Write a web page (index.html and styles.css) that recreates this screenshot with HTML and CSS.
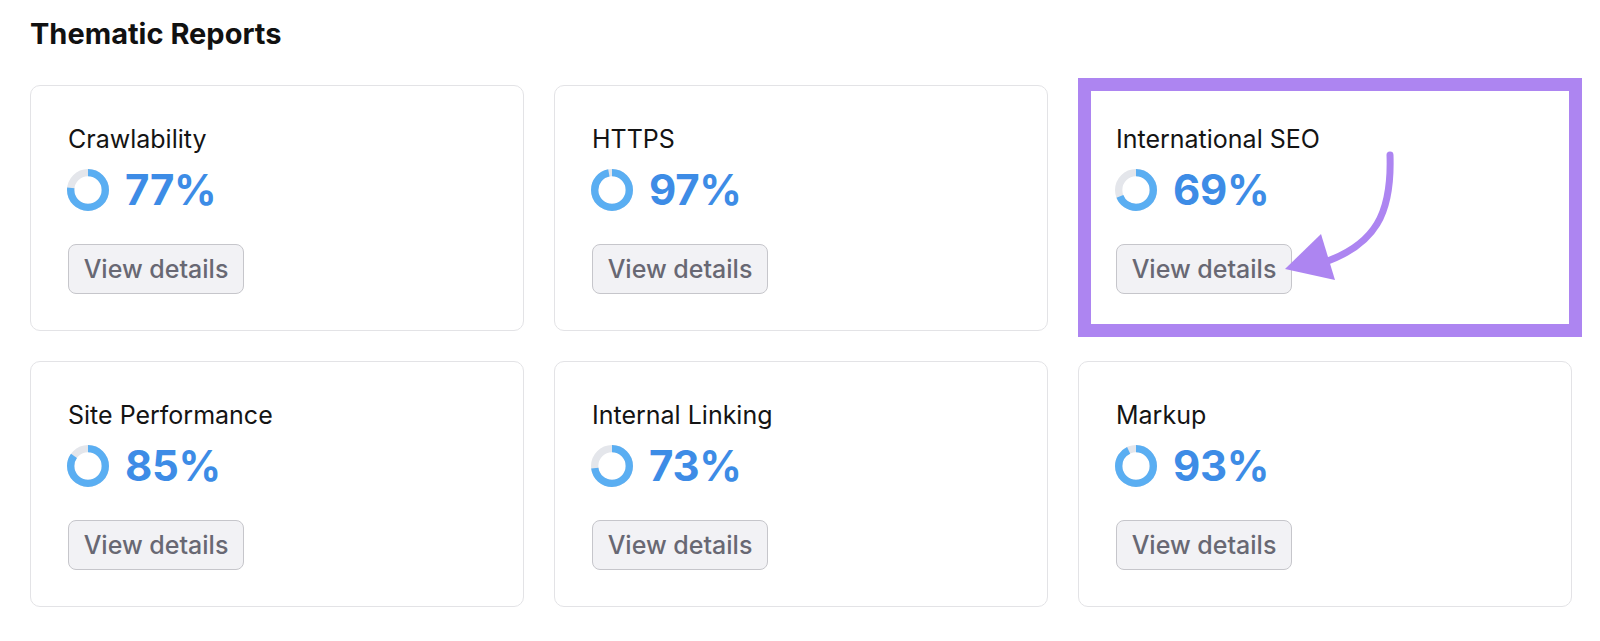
FILE: index.html
```html
<!DOCTYPE html>
<html lang="en">

<head>
    <meta charset="UTF-8">
    <meta name="viewport" content="width=device-width, initial-scale=1.0">
    <title>Thematic Reports</title>
    <link rel="stylesheet" href="styles.css">
</head>

<body>
    <main class="page">
        <h1 class="page-title">Thematic Reports</h1>

        <div class="report-grid">
            <div class="report-card">
                <p class="report-name">Crawlability</p>
                <div class="report-score">
                    <svg class="donut" viewBox="0 0 40 40">
                        <circle class="donut-track" cx="20" cy="20" r="16.5"></circle>
                        <circle class="donut-value" cx="20" cy="20" r="16.5" pathLength="100" stroke-dasharray="77 100"></circle>
                    </svg>
                    <span class="score-value">77%</span>
                </div>
                <button class="details-btn">View details</button>
            </div>

            <div class="report-card">
                <p class="report-name">HTTPS</p>
                <div class="report-score">
                    <svg class="donut" viewBox="0 0 40 40">
                        <circle class="donut-track" cx="20" cy="20" r="16.5"></circle>
                        <circle class="donut-value" cx="20" cy="20" r="16.5" pathLength="100" stroke-dasharray="97 100"></circle>
                    </svg>
                    <span class="score-value">97%</span>
                </div>
                <button class="details-btn">View details</button>
            </div>

            <div class="report-card highlighted">
                <p class="report-name">International SEO</p>
                <div class="report-score">
                    <svg class="donut" viewBox="0 0 40 40">
                        <circle class="donut-track" cx="20" cy="20" r="16.5"></circle>
                        <circle class="donut-value" cx="20" cy="20" r="16.5" pathLength="100" stroke-dasharray="69 100"></circle>
                    </svg>
                    <span class="score-value">69%</span>
                </div>
                <button class="details-btn">View details</button>

                <div class="highlight-frame"></div>
                <svg class="highlight-arrow" viewBox="0 0 494 246">
                    <path d="M312 70 C314 128 298 160 244 178" fill="none" stroke="#ad85f1" stroke-width="7" stroke-linecap="round"></path>
                    <polygon points="207,184 243,149 257,195" fill="#ad85f1"></polygon>
                </svg>
            </div>

            <div class="report-card">
                <p class="report-name">Site Performance</p>
                <div class="report-score">
                    <svg class="donut" viewBox="0 0 40 40">
                        <circle class="donut-track" cx="20" cy="20" r="16.5"></circle>
                        <circle class="donut-value" cx="20" cy="20" r="16.5" pathLength="100" stroke-dasharray="85 100"></circle>
                    </svg>
                    <span class="score-value">85%</span>
                </div>
                <button class="details-btn">View details</button>
            </div>

            <div class="report-card">
                <p class="report-name">Internal Linking</p>
                <div class="report-score">
                    <svg class="donut" viewBox="0 0 40 40">
                        <circle class="donut-track" cx="20" cy="20" r="16.5"></circle>
                        <circle class="donut-value" cx="20" cy="20" r="16.5" pathLength="100" stroke-dasharray="73 100"></circle>
                    </svg>
                    <span class="score-value">73%</span>
                </div>
                <button class="details-btn">View details</button>
            </div>

            <div class="report-card">
                <p class="report-name">Markup</p>
                <div class="report-score">
                    <svg class="donut" viewBox="0 0 40 40">
                        <circle class="donut-track" cx="20" cy="20" r="16.5"></circle>
                        <circle class="donut-value" cx="20" cy="20" r="16.5" pathLength="100" stroke-dasharray="93 100"></circle>
                    </svg>
                    <span class="score-value">93%</span>
                </div>
                <button class="details-btn">View details</button>
            </div>
        </div>
    </main>
</body>

</html>
```

FILE: styles.css
```css
* {
    margin: 0;
    padding: 0;
    box-sizing: border-box;
    font-family: Inter, "Noto Sans", sans-serif;
}

body {
    background: #ffffff;
    color: #1a1a1a;
}

.page {
    padding: 17px 28px 0 30px;
}

.page-title {
    font-size: 29px;
    font-weight: 700;
    line-height: 34px;
    color: #111111;
    margin-bottom: 34px;
}

.report-grid {
    display: grid;
    grid-template-columns: repeat(3, 494px);
    gap: 30px;
}

.report-card {
    position: relative;
    height: 246px;
    padding: 38px 37px 0 36px;
    border: 1.5px solid #e3e3e6;
    border-radius: 10px;
    background: #ffffff;
}

.report-name {
    font-size: 25px;
    line-height: 30px;
    font-weight: 400;
    color: #141414;
    padding-left: 1px;
}

.report-score {
    display: flex;
    align-items: center;
    gap: 16px;
    margin-top: 14px;
    height: 44px;
}

.donut {
    width: 42px;
    height: 42px;
    transform: rotate(-90deg);
}

.donut circle {
    fill: none;
    stroke-width: 7;
}

.donut-track {
    stroke: #e4e6eb;
}

.donut-value {
    stroke: #5aaef2;
}

.score-value {
    font-size: 42px;
    font-weight: 700;
    line-height: 44px;
    color: #3d8ce6;
    letter-spacing: -0.3px;
}

.details-btn {
    display: block;
    margin-top: 32px;
    margin-left: 1px;
    width: 176px;
    height: 50px;
    border: 1.5px solid #c6c6cb;
    border-radius: 8px;
    background: #f2f2f5;
    color: #686873;
    font-size: 25px;
    font-weight: 500;
    cursor: pointer;
}

.highlight-frame {
    position: absolute;
    top: -8px;
    left: -1.5px;
    right: -10.5px;
    bottom: -6.5px;
    border: 13px solid #ad85f1;
    pointer-events: none;
}

.highlight-arrow {
    position: absolute;
    top: -1.5px;
    left: -1.5px;
    width: 494px;
    height: 246px;
    overflow: visible;
    pointer-events: none;
}
```
